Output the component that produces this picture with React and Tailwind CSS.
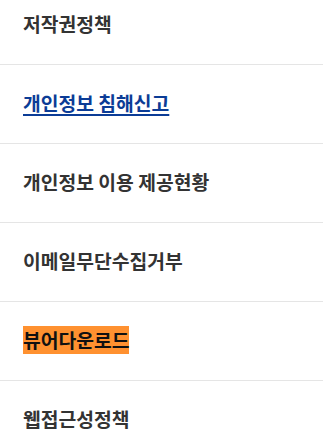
export default function App() {
  const font = { fontFamily: '"Noto Sans CJK KR", "Noto Sans", sans-serif' };
  const rowCls = "border-b border-[#e5e5e5] pl-[23px] pr-4 pt-[24px] pb-[25px] text-[19.3px] leading-[29px] font-bold text-[#333333]";
  return (
    <div className="w-[323px] h-[447px] overflow-hidden bg-white" style={font}>
      <ul className="flex flex-col">
        <li className="border-b border-[#e5e5e5] pl-[23px] pr-4 pt-[10px] pb-[25px] text-[19.3px] leading-[29px] font-bold text-[#333333]">
          <a>저작권정책</a>
        </li>
        <li className={rowCls}>
          <a className="text-[#0b3c96] underline decoration-2 underline-offset-[3px]">개인정보 침해신고</a>
        </li>
        <li className={rowCls}>
          <a>개인정보 이용 제공현황</a>
        </li>
        <li className={rowCls}>
          <a>이메일무단수집거부</a>
        </li>
        <li className={rowCls}>
          <a className="bg-[#ff9130] text-[#111111]">뷰어다운로드</a>
        </li>
        <li className={rowCls}>
          <a>웹접근성정책</a>
        </li>
      </ul>
    </div>
  );
}
